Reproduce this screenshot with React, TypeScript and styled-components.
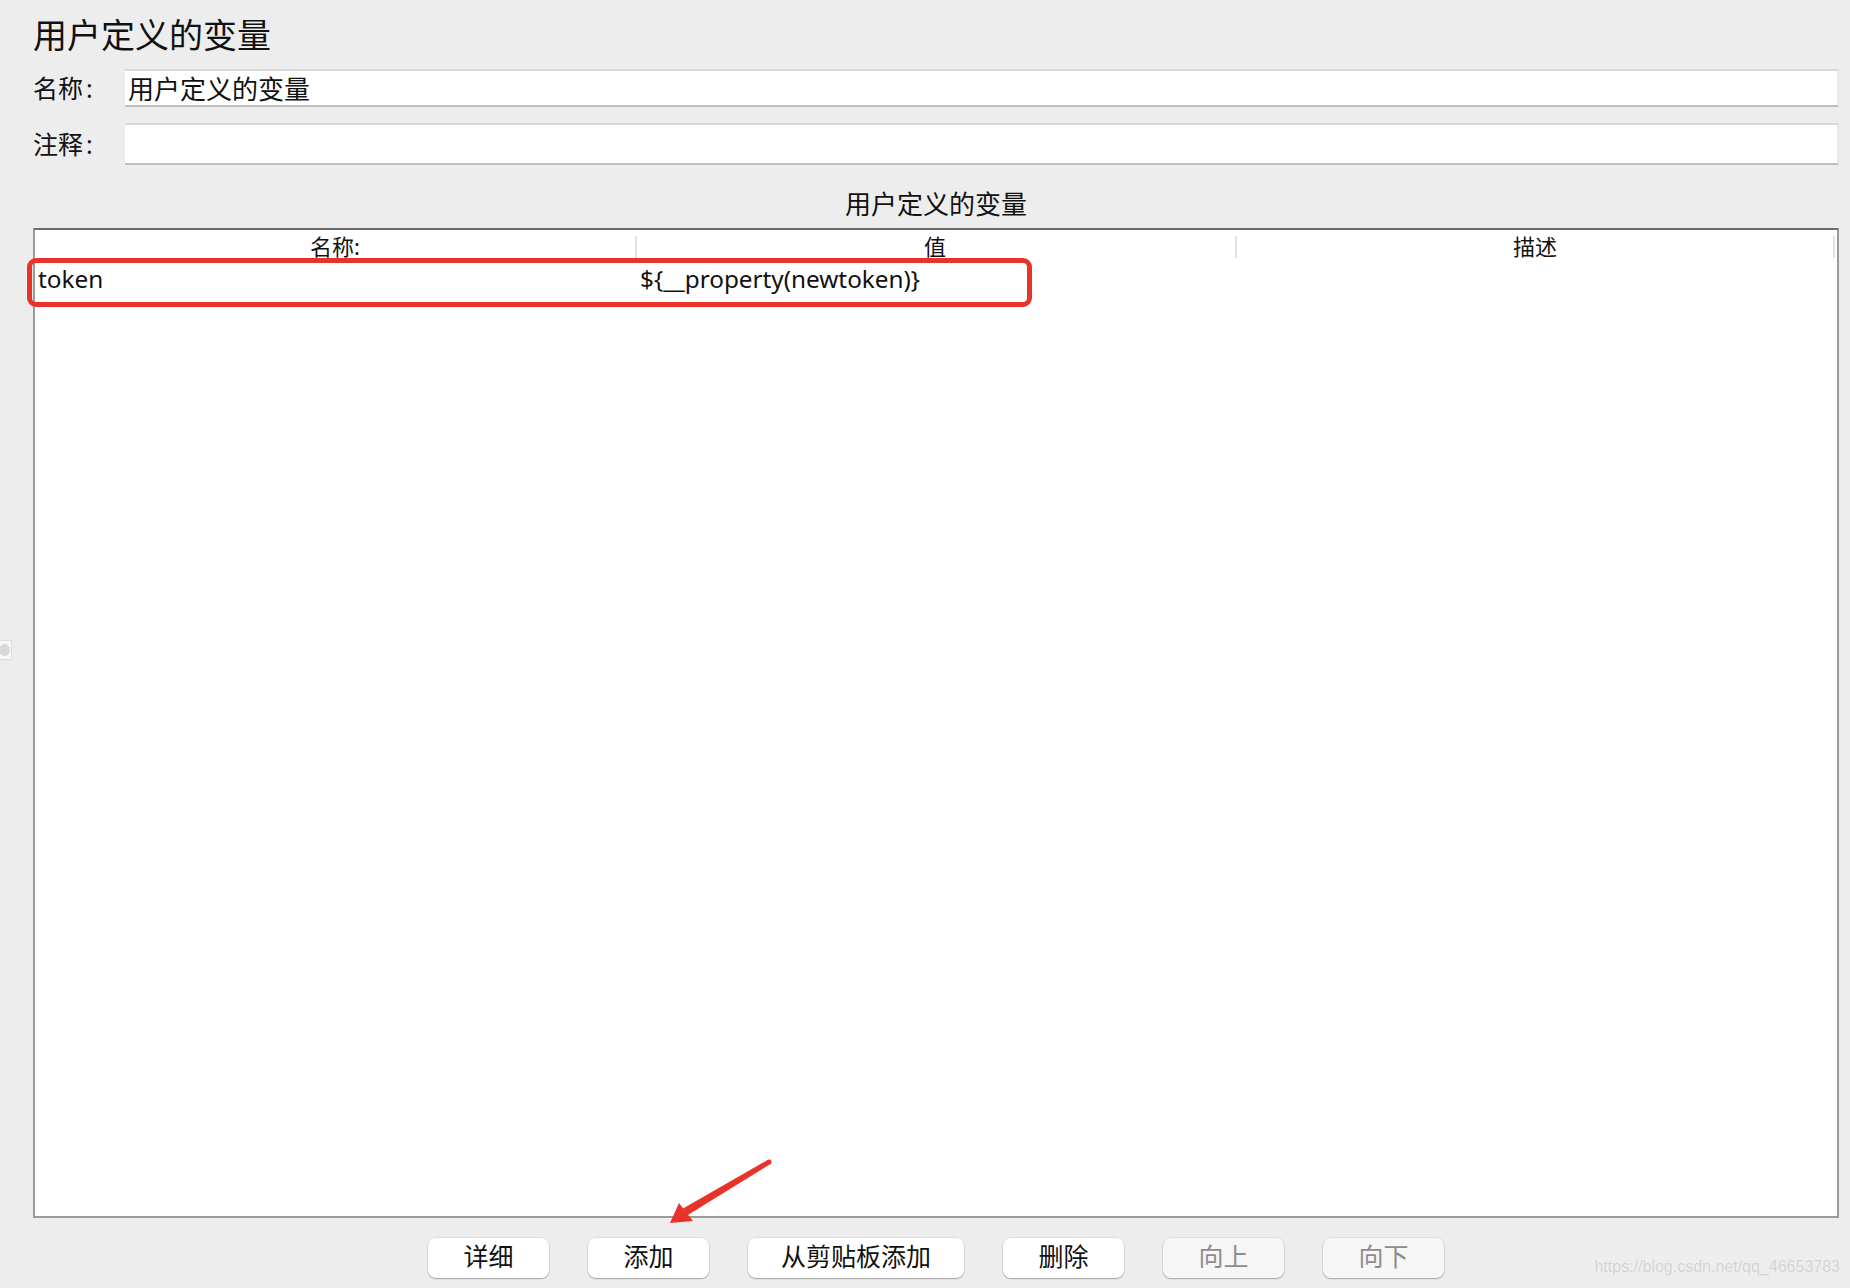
import React from "react";
import styled, { createGlobalStyle } from "styled-components";

const Global = createGlobalStyle`
  html, body { margin: 0; padding: 0; background: #ededed; }
  body { font-family: "Noto Sans", "Noto Sans CJK SC", sans-serif; color: #111; }
  * { box-sizing: border-box; }
`;

const Page = styled.div`
  position: relative;
  width: 1850px;
  height: 1288px;
  overflow: hidden;
  padding: 0 11px 0 33px;
  display: flex;
  flex-direction: column;
`;

const Title = styled.h1`
  margin: 15px 0 0;
  font-size: 34px;
  font-weight: 400;
  line-height: 40px;
  height: 40px;
`;

const FieldRow = styled.div<{ $top: number }>`
  display: flex;
  align-items: center;
  margin-top: ${(p) => p.$top}px;
`;

const FieldLabel = styled.label`
  width: 92px;
  flex: none;
  font-size: 25px;
  line-height: 30px;
`;

const Colon = styled.span`
  margin-left: 3px;
`;

const FieldBox = styled.div<{ $h: number }>`
  flex: 1;
  height: ${(p) => p.$h}px;
  background: #fff;
  border-top: 2px solid #d9d9d9;
  border-bottom: 2px solid #bfbfbf;
  border-right: 2px solid #e6e6e6;
  padding-left: 3px;
  display: flex;
  align-items: center;
  font-size: 26px;
`;

const SectionTitle = styled.div`
  margin-top: 24px;
  height: 30px;
  line-height: 30px;
  text-align: center;
  font-size: 26px;
`;

const Table = styled.div`
  position: relative;
  margin-top: 9px;
  height: 990px;
  background: #fff;
  border: 2px solid #9b9b9b;
  border-top-color: #6b6b6b;
  display: flex;
  flex-direction: column;
`;

const Grid = styled.div<{ $h: number }>`
  display: grid;
  grid-template-columns: 600px 600px 600px;
  height: ${(p) => p.$h}px;
`;

const HeaderCell = styled.div`
  position: relative;
  text-align: center;
  font-size: 22px;
  line-height: 32px;
  &:not(:first-child)::before {
    content: "";
    position: absolute;
    left: 0;
    top: 6px;
    bottom: 4px;
    width: 2px;
    background: #e2e2e2;
  }
  &:last-child::after {
    content: "";
    position: absolute;
    right: 0;
    top: 6px;
    bottom: 4px;
    width: 2px;
    background: #e2e2e2;
  }
`;

const Cell = styled.div<{ $pad: number }>`
  font-size: 24.3px;
  line-height: 34px;
  padding-left: ${(p) => p.$pad}px;
  white-space: nowrap;
`;

const Highlight = styled.div`
  position: absolute;
  left: -8px;
  top: 28px;
  width: 1005px;
  height: 49px;
  border: 5px solid #e8332a;
  border-radius: 9px;
  pointer-events: none;
`;

const ButtonBar = styled.div`
  margin-top: 20px;
  display: flex;
  justify-content: center;
  gap: 39px;
`;

const Btn = styled.button<{ $disabled?: boolean }>`
  height: 40px;
  min-width: 121px;
  padding: 0 33px 3px;
  border: none;
  border-radius: 8px;
  background: ${(p) => (p.$disabled ? "#f6f6f6" : "#fff")};
  color: ${(p) => (p.$disabled ? "#8c8c8c" : "#111")};
  font-family: "Noto Sans", "Noto Sans CJK SC", sans-serif;
  font-size: 25px;
  line-height: 37px;
  box-shadow: 0 1px 1.5px rgba(0, 0, 0, 0.28), 0 0 0 1px rgba(0, 0, 0, 0.05);
`;

const Arrow = styled.svg`
  position: absolute;
  left: 655px;
  top: 1150px;
  width: 125px;
  height: 80px;
  overflow: visible;
`;

const Watermark = styled.div`
  position: absolute;
  right: 10px;
  bottom: 12px;
  font-family: "Liberation Sans", sans-serif;
  font-size: 16px;
  color: #d2d2d2;
  text-shadow: 0 0 1px #fff;
`;

const SideHandle = styled.div`
  position: absolute;
  left: -2px;
  top: 640px;
  width: 14px;
  height: 20px;
  background: #f7f7f7;
  border: 1px solid #dedede;
  display: flex;
  align-items: center;
  justify-content: flex-end;
  padding-right: 1px;
  &::after {
    content: "";
    width: 12px;
    height: 12px;
    border-radius: 50%;
    background: #d9d9d9;
  }
`;

export default function App() {
  return (
    <>
      <Global />
      <Page>
        <Title>用户定义的变量</Title>
        <FieldRow $top={14}>
          <FieldLabel>
            名称<Colon>:</Colon>
          </FieldLabel>
          <FieldBox $h={38}>用户定义的变量</FieldBox>
        </FieldRow>
        <FieldRow $top={16}>
          <FieldLabel>
            注释<Colon>:</Colon>
          </FieldLabel>
          <FieldBox $h={42} />
        </FieldRow>
        <SectionTitle>用户定义的变量</SectionTitle>
        <Table>
          <Grid $h={32}>
            <HeaderCell>名称:</HeaderCell>
            <HeaderCell>值</HeaderCell>
            <HeaderCell>描述</HeaderCell>
          </Grid>
          <Grid $h={34}>
            <Cell $pad={3}>token</Cell>
            <Cell $pad={5}>{"${__property(newtoken)}"}</Cell>
            <Cell $pad={5} />
          </Grid>
          <Highlight />
        </Table>
        <ButtonBar>
          <Btn>详细</Btn>
          <Btn>添加</Btn>
          <Btn>从剪贴板添加</Btn>
          <Btn>删除</Btn>
          <Btn $disabled>向上</Btn>
          <Btn $disabled>向下</Btn>
        </ButtonBar>
        <Arrow viewBox="0 0 125 80">
          <polygon points="115.3,14.1 112.7,9.9 28,58.6 32,65.4" fill="#e8332a" />
          <circle cx="114" cy="12" r="2.5" fill="#e8332a" />
          <polygon points="15,73 24,53 38,71" fill="#e8332a" />
        </Arrow>
        <SideHandle />
        <Watermark>https://blog.csdn.net/qq_46653783</Watermark>
      </Page>
    </>
  );
}
